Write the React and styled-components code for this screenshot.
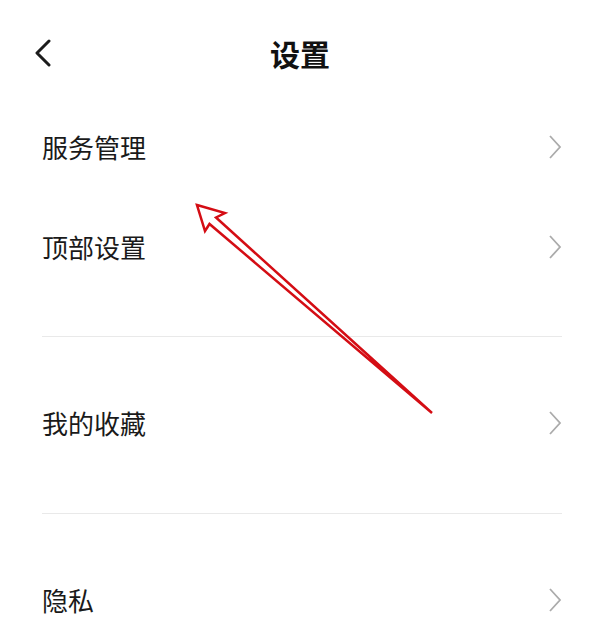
import React from "react";
import styled, { createGlobalStyle } from "styled-components";

const GlobalStyle = createGlobalStyle`
  html, body {
    margin: 0;
    padding: 0;
    background: #ffffff;
  }
  body {
    font-family: "Noto Sans CJK SC", "Noto Sans", sans-serif;
    color: #1a1a1a;
  }
`;

const Page = styled.div`
  position: relative;
  width: 600px;
  height: 635px;
  overflow: hidden;
  background: #fff;
`;

const Header = styled.div`
  display: grid;
  grid-template-columns: 80px 1fr 80px;
  align-items: center;
  height: 99px;
  padding: 7px 0 0 34px;
  box-sizing: border-box;
`;

const BackButton = styled.button`
  display: flex;
  align-items: center;
  border: 0;
  padding: 0;
  background: none;
  width: 20px;
  height: 30px;
`;

const Title = styled.h1`
  margin: 0 0 0 -34px;
  text-align: center;
  font-size: 30px;
  font-weight: 700;
  color: #111;
  line-height: 1;
`;

const Section = styled.div`
  display: flex;
  flex-direction: column;
  margin: 0 38px 0 42px;
  padding: ${(p) => p.$pad || "0"};
  border-bottom: ${(p) => (p.$divider ? "1px solid #e9e9e9" : "none")};
`;

const Row = styled.div`
  display: flex;
  align-items: center;
  justify-content: space-between;
  height: 100px;
`;

const Label = styled.span`
  font-size: 26px;
  line-height: 1;
  color: #1a1a1a;
  margin-top: -4px;
`;

const Annotation = styled.svg`
  position: absolute;
  left: 0;
  top: 0;
  pointer-events: none;
`;

const Chevron = () => (
  <svg width="14" height="26" viewBox="0 0 14 26" style={{ marginTop: -4 }}>
    <polyline
      points="2,2 12,13 2,24"
      fill="none"
      stroke="#ababab"
      strokeWidth="1.8"
      strokeLinejoin="miter"
    />
  </svg>
);

const Item = ({ label }) => (
  <Row>
    <Label>{label}</Label>
    <Chevron />
  </Row>
);

export default function App() {
  return (
    <Page>
      <GlobalStyle />
      <Header>
        <BackButton aria-label="back">
          <svg width="18" height="28" viewBox="0 0 18 28">
            <polyline
              points="15,2 3,14 15,26"
              fill="none"
              stroke="#1c1c1c"
              strokeWidth="3"
              strokeLinecap="round"
              strokeLinejoin="round"
            />
          </svg>
        </BackButton>
        <Title>设置</Title>
        <span />
      </Header>

      <Section $divider $pad="0 0 37px">
        <Item label="服务管理" />
        <Item label="顶部设置" />
      </Section>

      <Section $divider $pad="38px 0 38px">
        <Item label="我的收藏" />
      </Section>

      <Section $pad="38px 0 0">
        <Item label="隐私" />
      </Section>

      <Annotation width="600" height="635" viewBox="0 0 600 635">
        <polygon
          points="197,205 225,213 216,217.5 432,413 209.5,224 205,231"
          fill="none"
          stroke="#d40d14"
          strokeWidth="2.5"
          strokeLinejoin="miter"
        />
      </Annotation>
    </Page>
  );
}
